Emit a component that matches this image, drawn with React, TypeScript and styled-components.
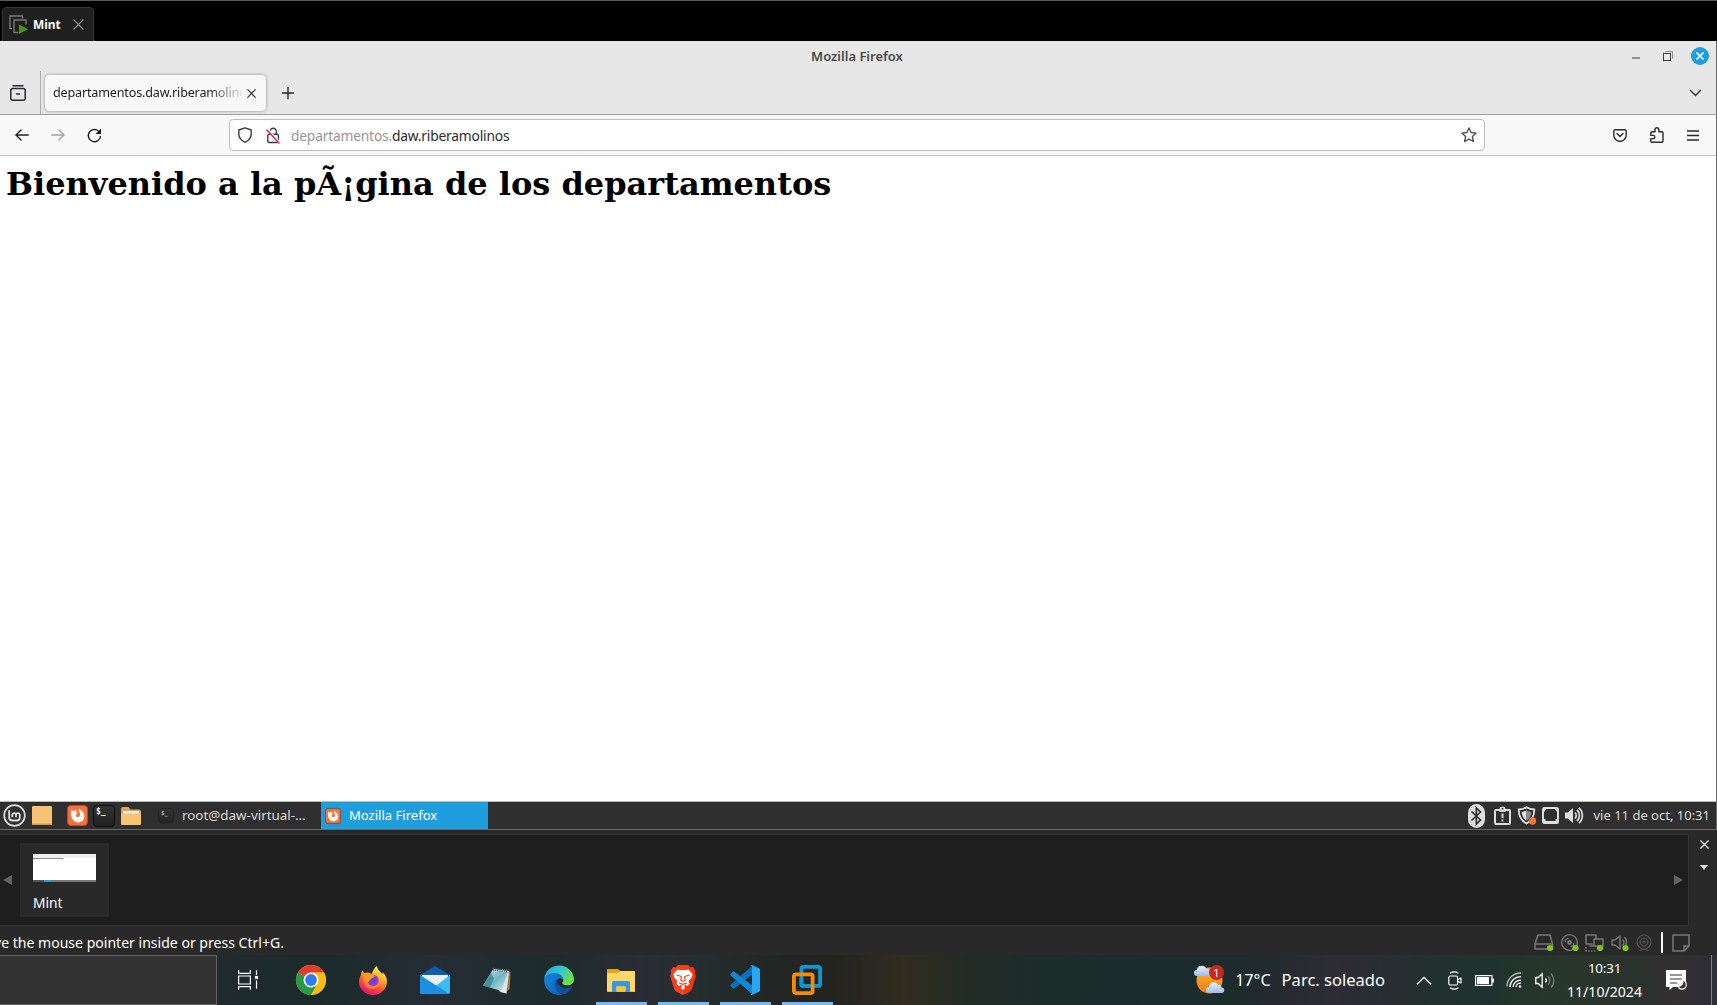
import React from "react";
import styled, { createGlobalStyle, css } from "styled-components";

const Global = createGlobalStyle`
  * { box-sizing: border-box; }
  html, body { margin: 0; padding: 0; background: #000; overflow: hidden; }
  svg { display: block; flex: none; overflow: visible; }
`;

const ui = `"Noto Sans", "Open Sans", sans-serif`;

const Desktop = styled.div`
  width: 1717px;
  height: 1005px;
  display: flex;
  flex-direction: column;
  font-family: ${ui};
  background: #292929;
`;

const Row = styled.div`
  display: flex;
  align-items: center;
  flex: none;
`;

const Slot = styled.span<{ $w: number }>`
  flex: none;
  width: ${(p) => p.$w}px;
  display: flex;
  align-items: center;
  justify-content: center;
`;

const Spacer = styled.div`
  flex: 1;
`;

/* ---------- VMware tab bar ---------- */
const VmTabs = styled(Row)`
  height: 41px;
  background: #000;
  border-top: 1px solid #5a5a5a;
  padding: 6px 0 0 2px;
  align-items: stretch;
`;

const VmTab = styled.div`
  width: 92px;
  display: flex;
  align-items: center;
  padding: 0 4px 0 6px;
  background: #1f1f1f;
  border: 1px solid #3a3a3a;
  border-bottom: 0;
  border-radius: 5px 5px 0 0;
  color: #fff;
  font-size: 11.9px;
  font-weight: 700;
`;

const VmTabLabel = styled.span`
  width: 45px;
  padding: 0 0 1px 5px;
`;

/* ---------- Guest screen ---------- */
const Guest = styled.div`
  height: 789px;
  display: flex;
  flex-direction: column;
  border-right: 1px solid #6b6b6b;
  border-bottom: 1px solid #6b6b6b;
  background: #fff;
  flex: none;
`;

const TitleBar = styled.div`
  height: 30px;
  display: grid;
  grid-template-columns: 1fr auto 1fr;
  align-items: center;
  background: #e7e7e7;
  color: #4a4a4a;
  flex: none;
`;

const WindowTitle = styled.span`
  grid-column: 2;
  padding-right: 2px;
  font-size: 13px;
  font-weight: 600;
  line-height: 18px;
`;

const WindowControls = styled(Row)`
  justify-self: end;
  padding-right: 1px;
`;

const TabStrip = styled(Row)`
  height: 44px;
  background: #e7e7e7;
  border-bottom: 1px solid #a0a0a0;
  padding-right: 6px;
`;

const StripDivider = styled.div`
  width: 1px;
  height: 100%;
  margin: 0 4px;
  background: #acacac;
`;

const BrowserTab = styled.div`
  width: 221px;
  height: 36px;
  display: flex;
  align-items: center;
  padding: 0 6px 0 8px;
  background: #f8f8f8;
  border-radius: 4px;
  box-shadow: 0 0 3px rgba(0, 0, 0, 0.45);
  margin-top: 1px;
`;

const TabLabel = styled.span`
  width: 189px;
  overflow: hidden;
  white-space: nowrap;
  font-size: 12.6px;
  letter-spacing: -0.18px;
  line-height: 20px;
  color: #1c1c1f;
  mask-image: linear-gradient(to right, #000 155px, rgba(0, 0, 0, 0.1) 189px);
`;

const NavBar = styled(Row)`
  height: 41px;
  padding: 0 6px 0 4px;
  background: #f8f8f8;
  border-bottom: 1px solid #c4c4c4;
`;

const UrlBar = styled(Row)`
  width: 1256px;
  height: 32px;
  margin: 0 117px;
  padding-left: 4px;
  background: #fff;
  border: 1px solid #bdbdbd;
  border-radius: 4px;
`;

const Url = styled.span`
  flex: 1;
  padding: 1px 0 0 1px;
  font-size: 13.8px;
  letter-spacing: -0.2px;
  line-height: 20px;
  color: #2b2b30;
`;

const UrlPrefix = styled.span`
  color: #96969a;
`;

const Page = styled.main`
  flex: 1;
  padding: 8px 6px;
  background: #fff;
`;

const Heading = styled.h1`
  margin: 1px 0 0;
  font: 700 32px "DejaVu Serif", serif;
  color: #000;
  white-space: nowrap;
`;

/* ---------- Cinnamon panel ---------- */
const Panel = styled(Row)`
  height: 28px;
  background: #2f2f2f;
  border-top: 1px solid #b9bcbc;
  color: #dcdcdc;
`;

const PanelTask = styled.div<{ $active?: boolean }>`
  width: 167px;
  height: 27px;
  display: flex;
  align-items: center;
  gap: 8px;
  padding-left: 4px;
  white-space: nowrap;
  font-size: ${(p) => (p.$active ? 13.05 : 13.4)}px;
  line-height: 20px;
  ${(p) =>
    p.$active &&
    css`
      background: #1f9ede;
      color: #fff;
    `}
`;

const TaskLabel = styled.span`
  padding-bottom: 2px;
`;

const PanelClock = styled.span`
  font-size: 13px;
  padding: 0 6px 2px 7px;
  white-space: nowrap;
`;

/* ---------- Library strip ---------- */
const Library = styled(Row)`
  height: 96px;
  padding-top: 4px;
  align-items: stretch;
`;

const LibraryBody = styled.div`
  width: 1689px;
  display: flex;
  align-items: center;
  background: #1e1e1e;
  border: 1px solid #323232;
  border-left: 0;
`;

const LibrarySide = styled.div`
  flex: 1;
  display: flex;
  flex-direction: column;
  align-items: center;
  gap: 16px;
  padding: 6px 0 0 2px;
`;

const VmTile = styled.div`
  width: 89px;
  height: 74px;
  margin-left: 5px;
  padding: 11px 13px 0;
  background: #292929;
  color: #fff;
  font-size: 13.8px;
  line-height: 20px;
`;

const Thumb = styled.div`
  width: 63px;
  height: 28px;
  margin-bottom: 11px;
  display: flex;
  flex-direction: column;
  background: #fff;
`;

const ThumbChrome = styled.div`
  height: 4px;
  background: #efefef;
`;

const ThumbTitle = styled.div`
  width: 30px;
  height: 1px;
  background: #8c8c8c;
`;

const ThumbPanel = styled.div`
  height: 2px;
  margin-top: auto;
  background: linear-gradient(to right, #555 11px, #1f9ede 11px 18px, #777 18px);
`;

const StatusBar = styled(Row)`
  height: 29px;
  padding: 4px 27px 0 0;
  overflow: hidden;
`;

const StatusText = styled.span`
  margin-left: -6px;
  font-size: 14.05px;
  line-height: 20px;
  color: #fff;
  white-space: nowrap;
  padding-top: 1px;
`;

const StatusCaret = styled.div`
  width: 2px;
  height: 21px;
  margin: 0 9px 0 6px;
  background: #f4f4f4;
`;

/* ---------- Windows taskbar ---------- */
const Taskbar = styled(Row)`
  height: 50px;
  color: #fff;
  background: linear-gradient(
    to right,
    #1f2b2d 217px, #1b2a2a 320px, #262d35 435px, #1c2b2c 550px, #2b2c35 640px,
    #242e30 700px, #222826 760px, #23231f 830px, #302c1f 905px, #222c27 965px,
    #1b2c2b 1060px, #1d2b2b 1240px, #2e2b35 1330px, #23302f 1420px, #20322e 1490px,
    #28372b 1560px, #2a332e 1630px, #333031 1680px, #2d2d34 1717px
  );
`;

const SearchBox = styled.div`
  width: 217px;
  height: 50px;
  margin-right: 1px;
  background: #323232;
  border: 1px solid #626262;
  border-left: 0;
`;

const AppButton = styled.div<{ $open?: boolean }>`
  width: 62px;
  height: 50px;
  display: flex;
  justify-content: center;
  align-items: center;
  background: ${(p) =>
    p.$open ? "linear-gradient(#76b9ed, #76b9ed) center bottom / 51px 3px no-repeat" : "none"};
`;

const Weather = styled(Row)`
  font-size: 16.55px;
  line-height: 24px;
  white-space: nowrap;
  gap: 11px;
`;

const Temperature = styled.span`
  font-size: 16.1px;
`;

const DateTime = styled.div`
  width: 87px;
  display: flex;
  flex-direction: column;
  align-items: center;
  font-size: 14.1px;
  line-height: 23px;
`;

const Time = styled.span`
  font-size: 13.4px;
  letter-spacing: -0.2px;
`;

const ShowDesktop = styled.div`
  width: 6px;
  height: 50px;
  border-left: 1px solid #7d7d80;
`;

/* ---------- Icons ---------- */
const stroke = (c: string, w = 1.4) => ({
  fill: "none",
  stroke: c,
  strokeWidth: w,
  strokeLinecap: "round" as const,
  strokeLinejoin: "round" as const,
});

const VmTabIcon = () => (
  <svg width="19" height="19" viewBox="0 0 19 19">
    <path d="M3 13.500H1V1h12.500v2.500" fill="none" stroke="#777" strokeWidth="1.400" />
    <path d="M9.500 17.500H5V5h12v4.500" fill="none" stroke="#777" strokeWidth="1.400" />
    <path d="M10 9.500v9.500l9-4.700z" fill="#3f9b0b" />
  </svg>
);

const Cross = ({ s, c, w = 1.2 }: { s: number; c: string; w?: number }) => (
  <svg width={s} height={s} viewBox="0 0 10 10">
    <path d="M.5.5l9 9M9.500.5l-9 9" fill="none" stroke={c} strokeWidth={w} />
  </svg>
);

const RecentIcon = () => (
  <svg width="16" height="16" viewBox="0 0 16 16" {...stroke("#2b2b30", 1.5)}>
    <path d="M3 .8h10" />
    <rect x=".8" y="3.600" width="14.400" height="11.600" rx="2" />
    <path d="M6.500 9h3" />
  </svg>
);

const Back = ({ c, flip }: { c: string; flip?: boolean }) => (
  <svg width="14" height="12" viewBox="0 0 14 12" {...stroke(c, 1.4)}>
    <path d={flip ? "M.8 6h12.400M8 1l5 5-5 5" : "M13.200 6H.8M6 1L1 6l5 5"} />
  </svg>
);

const Reload = () => (
  <svg width="15" height="15" viewBox="0 0 15 15">
    <path d="M13.400 8.500A6.100 6.100 0 1 1 11.300 3" {...stroke("#1f1f23", 1.4)} />
    <path d="M14 .5v5.500H8.500z" fill="#1f1f23" />
  </svg>
);

const ShieldIcon = () => (
  <svg width="14" height="16" viewBox="0 0 14 16" {...stroke("#3c3c42", 1.4)}>
    <path d="M7 .8L13.200 3v4c0 3.800-2.400 6.500-6.200 8.300C3.200 13.500.8 10.800.8 7V3z" />
  </svg>
);

const InsecureLock = () => (
  <svg width="14" height="17" viewBox="0 0 14 17">
    <path d="M4 7V4.500a3.200 3.200 0 0 1 6.400 0V7" {...stroke("#3c3c42", 1.4)} />
    <rect x="1.800" y="7.200" width="10.600" height="8.300" rx="1.500" {...stroke("#3c3c42", 1.4)} />
    <path d="M1.200 2l12.600 14" stroke="#fff" strokeWidth="2.200" />
    <path d="M.5 2.500l12.800 14" stroke="#e22850" strokeWidth="1.500" />
  </svg>
);

const Star = () => (
  <svg width="16" height="16" viewBox="0 0 16 16" {...stroke("#4c4c52", 1.3)}>
    <path d="M8 .9l2.100 4.600 5 .6-3.700 3.400 1 5L8 12.100l-4.400 2.400 1-5L.9 6.100l5-.6z" />
  </svg>
);

const Pocket = () => (
  <svg width="14" height="13" viewBox="0 0 14 13" {...stroke("#2b2b30", 1.4)}>
    <path d="M2 .8h10a1.200 1.200 0 0 1 1.200 1.200v4a6.200 6.200 0 0 1-12.400 0V2A1.200 1.200 0 0 1 2 .8z" />
    <path d="M4 4.600l3 3 3-3" />
  </svg>
);

const Puzzle = () => (
  <svg width="14" height="16" viewBox="0 0 14 16" {...stroke("#2b2b30", 1.4)}>
    <path d="M5 4.800V2.600a1.900 1.900 0 0 1 3.800 0v2.200h3a1.200 1.200 0 0 1 1.200 1.200v8a1.200 1.200 0 0 1-1.200 1.200H2A1.200 1.200 0 0 1 .8 14v-2.400h2.400a1.600 1.600 0 0 0 0-3.200H.8V6A1.200 1.200 0 0 1 2 4.800z" />
  </svg>
);

const Menu = () => (
  <svg width="12" height="11" viewBox="0 0 12 11">
    <path d="M0 1h12M0 5.500h12M0 10h12" stroke="#2b2b30" strokeWidth="1.300" />
  </svg>
);

const Chevron = ({ c, up }: { c: string; up?: boolean }) => (
  <svg width={up ? 16 : 13} height={up ? 9 : 8} viewBox={up ? "0 0 16 9" : "0 0 13 8"}>
    <path
      d={up ? "M1 8.300l7-7 7 7" : "M1 1l5.500 5.500L12 1"}
      fill="none"
      stroke={c}
      strokeWidth={up ? 1.3 : 1.5}
    />
  </svg>
);

const MintLogo = () => (
  <svg width="23" height="23" viewBox="0 0 23 23">
    <circle cx="11.500" cy="11.500" r="10.300" fill="none" stroke="#dedede" strokeWidth="1.700" />
    <path
      d="M6.200 6v7.500a3 3 0 0 0 3 3h4.600a3 3 0 0 0 3-3v-3a2 2 0 0 0-3.800 0v2.700m0-2.700a1.900 1.900 0 0 0-3.700 0v2.700"
      fill="none"
      stroke="#dedede"
      strokeWidth="1.800"
    />
  </svg>
);

const DesktopIcon = () => (
  <svg width="20" height="19" viewBox="0 0 20 19">
    <rect width="20" height="19" rx="1" fill="#f8c273" />
    <rect y="17.500" width="20" height="1.500" fill="#d29a4e" />
  </svg>
);

const MintFirefox = ({ s, edge = "#c04a1c" }: { s: number; edge?: string }) => (
  <svg width={s} height={s} viewBox="0 0 20 20">
    <rect x=".5" y=".5" width="19" height="19" rx="3.500" fill="#fb7139" stroke={edge} />
    <path
      d="M4.500 4c.6 1 1.200 1.500 2 1.600C7.500 4.800 9 4.600 9.800 4.800 9 5.300 8.500 6 8.600 6.800l1.700.5C9.300 8.300 8 9 8.200 10.200c.5 1.500 3 1.800 4 .3.700-1.500.3-3-.7-4.200-.5-1.200-.3-2.300.5-3.300.5 1.700 2.600 2.300 3.800 4.500 1.400 2.800.8 5.500-1 7.400-2.600 2.400-6.500 2.200-8.800-.3C3.500 12 3 8 4.500 4z"
      fill="#fff"
    />
  </svg>
);

const Prompt = styled.div<{ $s: number; $dim?: boolean }>`
  width: ${(p) => p.$s}px;
  height: ${(p) => p.$s}px;
  flex: none;
  padding: ${(p) => (p.$dim ? "1px 0 0 2px" : "2px 0 0 2px")};
  border: 1px solid ${(p) => (p.$dim ? "#262626" : "#0c0c0c")};
  border-radius: 4px;
  background: linear-gradient(#333, #222);
  color: ${(p) => (p.$dim ? "#a5a5a5" : "#f4f4f4")};
  font: 700 ${(p) => (p.$dim ? 6 : 8)}px/1 "DejaVu Sans Mono", monospace;
`;

const MintFolder = () => (
  <svg width="20" height="18" viewBox="0 0 20 18">
    <path d="M0 1.500A1.500 1.500 0 0 1 1.500 0h6l2 2.500H18A2 2 0 0 1 20 4v12H0z" fill="#dfa355" />
    <rect x="2" y="4" width="16" height="5" fill="#eee" />
    <path d="M0 6.500h20v10a1.500 1.500 0 0 1-1.500 1.500h-17A1.500 1.500 0 0 1 0 16.500z" fill="#f8c474" />
  </svg>
);

const Bluetooth = () => (
  <svg width="17" height="24" viewBox="0 0 17 24">
    <rect width="17" height="24" rx="8.500" fill="#dedede" />
    <path d="M3.500 7.500l9 8.500-4.200 4V4l4.200 4-9 8.500" fill="none" stroke="#2f2f2f" strokeWidth="1.700" />
  </svg>
);

const Clip = () => (
  <svg width="17" height="19" viewBox="0 0 17 19">
    <rect x="1" y="4" width="15" height="14" rx="1" fill="none" stroke="#dedede" strokeWidth="2" />
    <path d="M5.500 4V2.500A2 2 0 0 1 7.500.8h2a2 2 0 0 1 2 1.700V6h-6z" fill="#dedede" />
    <rect x="7.700" y="2" width="1.600" height="1.600" fill="#2f2f2f" />
    <path d="M8.500 7.500v4.500M8.500 13.500v2" stroke="#dedede" strokeWidth="2" />
  </svg>
);

const UpdateShield = () => (
  <svg width="19" height="19" viewBox="0 0 19 19">
    <path d="M9.500 1.200c2 1.500 4.800 2.300 7.800 2.300 0 6.500-2 11-7.800 14-5.800-3-7.800-7.500-7.800-14 3 0 5.800-.8 7.800-2.300z" fill="#2f2f2f" stroke="#dedede" strokeWidth="1.800" />
    <path d="M9.500 4.200v10.500C6.300 12.500 5 10 4.600 6c1.900-.2 3.500-.8 4.900-1.800z" fill="#e2e2e2" />
    <path d="M9.500 4.200v10.500C12.700 12.500 14 10 14.400 6c-1.900-.2-3.500-.8-4.900-1.800z" fill="#8c8c8c" />
    <circle cx="15.500" cy="15" r="3.700" fill="#f47530" />
  </svg>
);

const Wired = () => (
  <svg width="17" height="17" viewBox="0 0 17 17">
    <rect x="1" y="1" width="15" height="15" rx="1.500" fill="none" stroke="#dedede" strokeWidth="2" />
    <path d="M1.500 12v3.500h14V12h-2v2h-10v-2zM2 2h2.500L2.500 4.500H2zM15 2h-2.500l2 2.500h.5z" fill="#dedede" />
  </svg>
);

const MintVolume = () => (
  <svg width="19" height="17" viewBox="0 0 19 17">
    <path d="M0 5.500h3l5-4.500v15l-5-4.500H0z" fill="#dedede" />
    <path d="M10 5.500a4.200 4.200 0 0 1 0 6M12 3a7.400 7.400 0 0 1 0 11M14 .8a10.500 10.500 0 0 1 0 15.400" fill="none" stroke="#dedede" strokeWidth="1.700" />
  </svg>
);

const Arrow = ({ left }: { left?: boolean }) => (
  <svg width="9" height="10" viewBox="0 0 9 10">
    <path d={left ? "M9 0v10L0 5z" : "M0 0v10l9-5z"} fill="#626262" />
  </svg>
);

const Dot = ({ x, y = 14 }: { x: number; y?: number }) => <circle cx={x} cy={y} r="3.100" fill="#7ac813" />;

const Drive = () => (
  <svg width="20" height="18" viewBox="0 0 20 18">
    <path d="M1 10L4 1h12l2.500 9v5H1zM1 10h17.500" {...stroke("#777", 1.5)} />
    <Dot x={16} />
  </svg>
);

const Disc = () => (
  <svg width="20" height="18" viewBox="0 0 20 18">
    <circle cx="9.500" cy="8.500" r="7.900" {...stroke("#777", 1.4)} />
    <circle cx="9.500" cy="8.500" r="1.600" {...stroke("#999", 1.2)} />
    <path d="M5 8a4.500 4.500 0 0 1 3-3.800M14 9a4.500 4.500 0 0 1-3 3.800" {...stroke("#777", 1.2)} />
    <Dot x={15.500} />
  </svg>
);

const VmNetwork = () => (
  <svg width="20" height="18" viewBox="0 0 20 18">
    <path d="M7 10H1V1h10v3M9 5h9v7H9zM5 12h5" {...stroke("#777", 1.5)} />
    <path d="M1 13v4h11" fill="none" stroke="#777" strokeWidth="1.400" strokeDasharray="1.500 1.500" />
    <Dot x={15} />
  </svg>
);

const VmSound = () => (
  <svg width="20" height="18" viewBox="0 0 20 18">
    <path d="M1 6h3l5-4v13l-5-4H1zM12 6a4 4 0 0 1 0 5M14 3.500a7 7 0 0 1 1 7" {...stroke("#777", 1.4)} />
    <Dot x={14.500} />
  </svg>
);

const Webcam = () => (
  <svg width="16" height="18" viewBox="0 0 16 18" {...stroke("#555", 1.2)}>
    <circle cx="8" cy="8" r="7" />
    <circle cx="8" cy="8" r="3.800" />
    <circle cx="8" cy="8" r="1" />
    <path d="M4 16.500c2-1 6-1 8 0" />
  </svg>
);

const Note = () => (
  <svg width="18" height="18" viewBox="0 0 18 18">
    <path d="M1 1h16v11l-5 5H1zM12 17v-5h5" fill="none" stroke="#777" strokeWidth="1.500" />
  </svg>
);

const TaskView = () => (
  <svg width="23" height="20" viewBox="0 0 23 20" fill="none" stroke="#fff" strokeWidth="1.200">
    <path d="M.6 0v3.400h11.800V0M.6 20v-3.400h11.800V20M.6 6h11.800v8H.6zM18.500 0v5M18.500 10.500V19" />
    <rect x="17.500" y="6.500" width="2" height="2" fill="#fff" />
  </svg>
);

const Chrome = () => (
  <svg width="30" height="30" viewBox="0 0 30 30">
    <circle cx="15" cy="15" r="15" fill="#fbbc12" />
    <path d="M15 15L2 7.500A15 15 0 0 0 15 30l6.500-11.200z" fill="#2a9a48" />
    <path d="M15 15L2 7.500A15 15 0 0 1 28 7.500H15z" fill="#e33b2e" />
    <path d="M15 7.500h13A15 15 0 0 1 15 30l6.500-11.200z" fill="#fbbc12" />
    <circle cx="15" cy="15" r="7.500" fill="#fff" />
    <circle cx="15" cy="15" r="5.900" fill="#2f7cf0" />
  </svg>
);

const Firefox = () => (
  <svg width="28" height="29" viewBox="0 0 28 29">
    <defs>
      <linearGradient id="ffBody" x1=".8" y1="0" x2=".3" y2="1">
        <stop offset=".1" stopColor="#fff04a" />
        <stop offset=".4" stopColor="#ffa722" />
        <stop offset=".68" stopColor="#ff4a3d" />
        <stop offset="1" stopColor="#ea0a79" />
      </linearGradient>
      <radialGradient id="ffCore">
        <stop offset="0" stopColor="#5a3ed0" />
        <stop offset="1" stopColor="#9b3fd8" />
      </radialGradient>
    </defs>
    <path d="M2 9c0-2 .8-3.500 2-5 .2 1.500.6 2.500 1.400 3.200C6.500 6.600 8 6.300 9.500 6.500L13 8c.6-3.500 2.400-6 5-8 .3 3 2 4.500 3.800 6.500l1.400 1.800.3-2C26.500 9 28 12 28 15.500A14 13.500 0 0 1 0 15.500C0 13 .8 11 2 9z" fill="url(#ffBody)" />
    <path d="M5 8.500c3-2 6-1.500 8 .8 4-1 8 2 8 6.500 0 5-4 7.500-8 7.200-5 0-9-4-9-9 0-2 .3-4 1-5.500z" fill="#ff8f25" opacity=".75" />
    <circle cx="14.200" cy="14.500" r="5.500" fill="url(#ffCore)" />
    <path d="M5 8.500c3-2 6-1.500 8 .8 1.500 0 2.500.5 2.700 1-.8 1.500-2.500 1.700-3.500 2.200-.7 1.500-2.400 1.800-2.800 3.500C6.500 16 4.500 12 5 8.500z" fill="#ff9a22" />
  </svg>
);

const Mail = () => (
  <svg width="30" height="28" viewBox="0 0 30 28">
    <path d="M0 9L15 0l15 9v5H0z" fill="#0a5ead" />
    <path d="M2 9h26v8L15 23 2 17z" fill="#eceef0" />
    <path d="M0 9l15 11.500L30 9v17a2 2 0 0 1-2 2H2a2 2 0 0 1-2-2z" fill="#38bdf3" />
    <path d="M0 9l29 18.700a2 2 0 0 1-1 .3H2a2 2 0 0 1-2-2z" fill="#1d8fe0" />
  </svg>
);

const Notepad = () => (
  <svg width="28" height="27" viewBox="0 0 28 27">
    <defs>
      <linearGradient id="pad" x1="0" y1="0" x2="1" y2="1">
        <stop offset="0" stopColor="#c8e8ee" />
        <stop offset=".5" stopColor="#6fb4c4" />
        <stop offset="1" stopColor="#d3eef2" />
      </linearGradient>
    </defs>
    <path d="M23 3l4.500 2-.8 17-4 3z" fill="#a87832" />
    <path d="M10 2l16 2-2.500 22.500L17 25z" fill="#dfe5e8" />
    <path d="M9.500 3L25 5l-6.500 19L0 18.500z" fill="url(#pad)" />
    <path d="M8 6L0 18.500l7 2 4-9z" fill="#2c7d8b" opacity=".7" />
    <path d="M10 2.200l15.500 2" stroke="#6b6f73" strokeWidth="3" strokeDasharray="1 1.200" />
  </svg>
);

const Edge = () => (
  <svg width="30" height="30" viewBox="0 0 30 30">
    <defs>
      <linearGradient id="edgeTop" x1="0" y1="0" x2="1" y2=".5">
        <stop offset="0" stopColor="#1e9fe0" />
        <stop offset=".5" stopColor="#32c4d0" />
        <stop offset="1" stopColor="#66e345" />
      </linearGradient>
      <linearGradient id="edgeLeft" x1="0" y1="0" x2=".8" y2="1">
        <stop offset="0" stopColor="#1387df" />
        <stop offset="1" stopColor="#0b62bd" />
      </linearGradient>
    </defs>
    <path d="M.2 13.500A15 15 0 0 1 30 14c.2 4-2.800 6.300-6.500 6.300-3 0-5.300-1-5.300-2.300 0-.8 1-1.300 1-3.200 0-3-3.200-5.800-8-5.800-5 0-9.200 1.500-11 4.500z" fill="url(#edgeTop)" />
    <path d="M.1 14C1 10.500 5 8 10.500 8c5.200 0 8.700 3.200 8.700 6.800-1-1-2.200-1.500-3.700-1.500-3.500 1-5 4.500-4 8 1 4.500 4 7.500 8 8A15 15 0 0 1 .1 14z" fill="url(#edgeLeft)" />
    <path d="M12.500 14.500c-2 2.500-2.500 6-.5 9.500 2.500 4 6 5.500 8.500 5 3.300-1.300 5.800-3.500 7.400-6.300.3-.7-.3-1-.8-.7-5.100 2.500-13.200.7-14.600-7.500z" fill="#124f9c" />
  </svg>
);

const Explorer = () => (
  <svg width="28" height="23" viewBox="0 0 28 23">
    <path d="M0 1a1 1 0 0 1 1-1h10l2 2h14a1 1 0 0 1 1 1v20H0z" fill="#e5a50a" />
    <path d="M0 4h11l2-2h14a1 1 0 0 1 1 1v19.500H0z" fill="#ffd765" />
    <path d="M5 23v-9.500a1.500 1.500 0 0 1 1.500-1.500h15a1.500 1.500 0 0 1 1.500 1.500V23h-4.500v-5.500h-9V23z" fill="#3d96e0" />
    <path d="M9.500 17.500h9V22h-9z" fill="#fcc63c" />
  </svg>
);

const Brave = () => (
  <svg width="26" height="30" viewBox="0 0 26 30">
    <path d="M8 0h10l2.500 2.500L23 2l2.500 4-.8 2 1 3L22 23.500c-.6 2-2 2.800-4 4L13 30l-5-2.500c-2-1.200-3.400-2-4-4L.3 11l1-3-.8-2L3 2l2.500.5z" fill="#f9401a" />
    <path d="M18 0l2.500 2.500L23 2l2.500 4-.8 2 1 3L22 23.500c-.6 2-2 2.800-4 4L13 30z" fill="#ff2a00" opacity=".5" />
    <path d="M7.500 4.500L10 5h6l2.500-.5L22.500 9l-.8 3.500-3.200 3.800 1 2.700-2.500 2-2-1.200-1 1 1 2.200L13 25l-2-2 1-2.200-1-1L9 21l-2.500-2 1-2.700-3.200-3.800L3.500 9z" fill="#fff" />
    <path d="M6.500 10l4 1.200 1 .8-.8 3.300L13 16.500l2.300-1.200-.8-3.300 1-.8 4-1.200M9 18l4 1.300L17 18" fill="none" stroke="#f9401a" strokeWidth="1.100" />
  </svg>
);

const VsCode = () => (
  <svg width="30" height="30" viewBox="0 0 30 30">
    <path d="M22 1L.8 19.500c-.7.700-.7 1.400 0 2.100l1.700 1.600c.6.500 1.200.5 1.900 0L24 8z" fill="#0b71bd" />
    <path d="M22 29L.8 10.500c-.7-.7-.7-1.400 0-2.100l1.700-1.600c.6-.5 1.200-.5 1.900 0L24 22z" fill="#1487d4" />
    <path d="M22 0l7 3.200c.7.400 1 .9 1 1.700v20.200c0 .8-.3 1.300-1 1.700L22 30c-.8 0-1.400-.3-2-.8 1 .6 2 0 2-1.200V2c0-1.200-1-1.800-2-1.200.6-.5 1.200-.8 2-.8z" fill="#2aa4f4" />
  </svg>
);

const Vmware = () => (
  <svg width="30" height="30" viewBox="0 0 30 30" fill="none" strokeWidth="3.800">
    <rect x="9.400" y="1.900" width="18.700" height="19" rx="2" stroke="#0a98d8" />
    <rect x="1.900" y="9.400" width="18.700" height="18.700" rx="2" stroke="#f68b0b" />
    <path d="M9.400 13v6a2 2 0 0 0 2 2H17" stroke="#0a98d8" />
  </svg>
);

const WeatherIcon = () => (
  <svg width="30" height="30" viewBox="0 0 30 30">
    <defs>
      <linearGradient id="sun" x1="0" y1="0" x2="0" y2="1">
        <stop offset="0" stopColor="#ffb52b" />
        <stop offset="1" stopColor="#f17a12" />
      </linearGradient>
      <linearGradient id="cloud" x1="0" y1="0" x2="0" y2="1">
        <stop offset="0" stopColor="#e8f1fd" />
        <stop offset="1" stopColor="#9dbdeb" />
      </linearGradient>
    </defs>
    <circle cx="15.500" cy="15.500" r="13" fill="url(#sun)" />
    <path d="M3 11a3 3 0 0 1 0-6 4 4 0 0 1 4-4c2.500-1 5 .8 5.300 3 2-.3 3.700 1.200 3.700 3.500 0 2-1.500 3.500-3 3.500z" fill="url(#cloud)" />
    <path d="M15 28a3 3 0 0 1 0-6 5 5 0 0 1 9.500-2c2-.3 3 1 3 2.500a2.700 2.700 0 0 1 0 5.500z" fill="url(#cloud)" />
    <circle cx="22.500" cy="7.500" r="7.500" fill="#c42b20" />
    <text x="22.500" y="11.500" textAnchor="middle" fontSize="11" fill="#fff" fontFamily="Noto Sans, sans-serif">1</text>
  </svg>
);

const MeetNow = () => (
  <svg width="14" height="19" viewBox="0 0 14 19" {...stroke("#fff", 1.2)}>
    <rect x=".8" y="5" width="8.800" height="9" rx="1.500" />
    <path d="M10 8.500L13 7v5l-3-1.500M2.500 2c2-1.500 5.500-1.500 7.500 0M2.500 17c2 1.500 5.500 1.500 7.500 0" />
  </svg>
);

const Battery = () => (
  <svg width="19" height="11" viewBox="0 0 19 11">
    <rect x=".6" y=".6" width="16.300" height="9.800" fill="none" stroke="#fff" strokeWidth="1.200" />
    <path d="M2 2h12v7H2zM17 3.500h2v4h-2z" fill="#fff" />
  </svg>
);

const Wifi = () => (
  <svg width="16" height="16" viewBox="0 0 16 16" fill="none" stroke="#fff" strokeWidth="1.300">
    <path d="M1 14.500A13.500 13.500 0 0 1 15 1" opacity=".65" />
    <path d="M4 15A10.500 10.500 0 0 1 15 4.700M7 15a7.500 7.500 0 0 1 8-6.800" />
    <path d="M10 15a4.500 4.500 0 0 1 5-3.800" />
    <circle cx="14" cy="14.500" r="1.200" fill="#fff" stroke="none" />
  </svg>
);

const Volume = () => (
  <svg width="20" height="17" viewBox="0 0 20 17" fill="none" stroke="#fff" strokeWidth="1.300">
    <path d="M.8 5.500h2.400l4-3.700v13.400l-4-3.700H.8zM10.500 6.500a3 3 0 0 1 0 4" />
    <path d="M13 4.200a6 6 0 0 1 0 8.600M16 1.500a10 10 0 0 1 0 14" stroke="#75827b" />
  </svg>
);

const ActionCenter = () => (
  <svg width="21" height="21" viewBox="0 0 21 21">
    <path d="M0 0h20v17H7l-3.500 3V17H0z" fill="#fff" />
    <path d="M4 5h12M4 9h12M4 13h7" stroke="#303030" strokeWidth="1.200" />
    <path d="M16.500 9.500c1.500 3.500-.5 6.500-4.500 7 1.500 3.500 6.500 3.500 8 0 .8-3-.8-5.800-3.500-7z" fill="#303030" stroke="#fff" strokeWidth="1.100" />
  </svg>
);

const taskbarApps = [
  { name: "chrome", icon: <Chrome />, open: false },
  { name: "firefox", icon: <Firefox />, open: false },
  { name: "mail", icon: <Mail />, open: false },
  { name: "notepad", icon: <Notepad />, open: false },
  { name: "edge", icon: <Edge />, open: false },
  { name: "explorer", icon: <Explorer />, open: true },
  { name: "brave", icon: <Brave />, open: true },
  { name: "vscode", icon: <VsCode />, open: true },
  { name: "vmware", icon: <Vmware />, open: true },
];

export default function App() {
  return (
    <Desktop>
      <Global />
      <VmTabs>
        <VmTab>
          <VmTabIcon />
          <VmTabLabel>Mint</VmTabLabel>
          <Cross s={11} c="#8a8a8a" w={1.1} />
        </VmTab>
      </VmTabs>

      <Guest>
        <TitleBar>
          <WindowTitle>Mozilla Firefox</WindowTitle>
          <WindowControls>
            <Slot $w={32}>
              <svg width="8" height="6"><path d="M0 5h8" stroke="#3c3c3c" /></svg>
            </Slot>
            <Slot $w={32}>
              <svg width="10" height="10">
                <path d="M2.500.5h7v7" fill="none" stroke="#8d8d8d" />
                <rect x=".5" y="2.500" width="7" height="7" fill="none" stroke="#3c3c3c" />
              </svg>
            </Slot>
            <Slot $w={31}>
              <svg width="18" height="18" viewBox="0 0 18 18">
                <circle cx="9" cy="9" r="9" fill="#1f9ede" />
                <path d="M5.500 5.500l7 7M12.500 5.500l-7 7" stroke="#fff" strokeWidth="1.600" />
              </svg>
            </Slot>
          </WindowControls>
        </TitleBar>

        <TabStrip>
          <Slot $w={36}><RecentIcon /></Slot>
          <StripDivider />
          <BrowserTab>
            <TabLabel>departamentos.daw.riberamolinos</TabLabel>
            <Slot $w={18}><Cross s={9} c="#2b2b30" w={1.3} /></Slot>
          </BrowserTab>
          <Slot $w={43}>
            <svg width="12" height="12"><path d="M6 0v12M0 6h12" stroke="#2b2b30" strokeWidth="1.400" /></svg>
          </Slot>
          <Spacer />
          <Slot $w={30}><Chevron c="#3c3c40" /></Slot>
        </TabStrip>

        <NavBar>
          <Slot $w={36}><Back c="#1f1f23" /></Slot>
          <Slot $w={36}><Back c="#a0a0a3" flip /></Slot>
          <Slot $w={36}><Reload /></Slot>
          <UrlBar>
            <Slot $w={22}><ShieldIcon /></Slot>
            <Slot $w={34}><InsecureLock /></Slot>
            <Url><UrlPrefix>departamentos.</UrlPrefix>daw.riberamolinos</Url>
            <Slot $w={30}><Star /></Slot>
          </UrlBar>
          <Slot $w={36}><Pocket /></Slot>
          <Slot $w={37}><Puzzle /></Slot>
          <Slot $w={35}><Menu /></Slot>
        </NavBar>

        <Page>
          <Heading>Bienvenido a la pÃ¡gina de los departamentos</Heading>
        </Page>

        <Panel>
          <Slot $w={28}><MintLogo /></Slot>
          <Slot $w={28}><DesktopIcon /></Slot>
          <Slot $w={42}><MintFirefox s={21} /></Slot>
          <Slot $w={12}><Prompt $s={22}>$_</Prompt></Slot>
          <Slot $w={42}><MintFolder /></Slot>
          <Slot $w={2} />
          <PanelTask>
            <Prompt $s={16} $dim>$_</Prompt>
            <TaskLabel>root@daw-virtual-…</TaskLabel>
          </PanelTask>
          <PanelTask $active>
            <MintFirefox s={16} edge="#5c4c48" />
            <TaskLabel>Mozilla Firefox</TaskLabel>
          </PanelTask>
          <Spacer />
          <Slot $w={26}><Bluetooth /></Slot>
          <Slot $w={26}><Clip /></Slot>
          <Slot $w={23}><UpdateShield /></Slot>
          <Slot $w={25}><Wired /></Slot>
          <Slot $w={23}><MintVolume /></Slot>
          <PanelClock>vie 11 de oct, 10:31</PanelClock>
        </Panel>
      </Guest>

      <Library>
        <LibraryBody>
          <Slot $w={15}><Arrow left /></Slot>
          <VmTile>
            <Thumb>
              <ThumbChrome />
              <ThumbTitle />
              <ThumbPanel />
            </Thumb>
            Mint
          </VmTile>
          <Spacer />
          <Slot $w={19}><Arrow /></Slot>
        </LibraryBody>
        <LibrarySide>
          <Cross s={9} c="#e4e4e4" w={1.5} />
          <svg width="8" height="5"><path d="M0 0h8L4 5z" fill="#e4e4e4" /></svg>
        </LibrarySide>
      </Library>

      <StatusBar>
        <StatusText>ve the mouse pointer inside or press Ctrl+G.</StatusText>
        <Spacer />
        <Slot $w={26}><Drive /></Slot>
        <Slot $w={25}><Disc /></Slot>
        <Slot $w={26}><VmNetwork /></Slot>
        <Slot $w={25}><VmSound /></Slot>
        <Slot $w={22}><Webcam /></Slot>
        <StatusCaret />
        <Note />
      </StatusBar>

      <Taskbar>
        <SearchBox />
        <AppButton><TaskView /></AppButton>
        {taskbarApps.map((a) => (
          <AppButton key={a.name} $open={a.open}>{a.icon}</AppButton>
        ))}
        <Spacer />
        <Weather>
          <WeatherIcon />
          <Temperature>17°C</Temperature>
          <span>Parc. soleado</span>
        </Weather>
        <Slot $w={24} />
        <Slot $w={30}><Chevron c="#fff" up /></Slot>
        <Slot $w={32}><MeetNow /></Slot>
        <Slot $w={27}><Battery /></Slot>
        <Slot $w={32}><Wifi /></Slot>
        <Slot $w={29}><Volume /></Slot>
        <Slot $w={2} />
        <DateTime>
          <Time>10:31</Time>
          <span>11/10/2024</span>
        </DateTime>
        <Slot $w={56}><ActionCenter /></Slot>
        <Slot $w={7} />
        <ShowDesktop />
      </Taskbar>
    </Desktop>
  );
}
